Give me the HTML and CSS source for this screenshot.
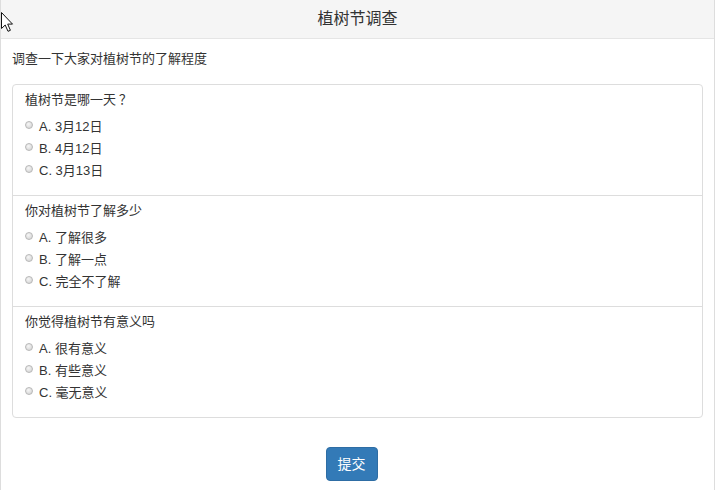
FILE: index.html
```html
<!DOCTYPE html>
<html lang="zh-CN">
<head>
  <meta charset="UTF-8">
  <meta name="viewport" content="width=device-width, initial-scale=1.0">
  <title>植树节调查</title>
  <link rel="stylesheet" href="styles.css">
</head>
<body>

  <div class="page">
    <div class="page-header">植树节调查</div>

    <p class="intro">调查一下大家对植树节的了解程度</p>

    <form class="survey">
      <div class="question">
        <p class="question-title">植树节是哪一天<span class="qmark">？</span></p>
        <label class="option"><input type="radio" name="q1"> A. 3月12日</label>
        <label class="option"><input type="radio" name="q1"> B. 4月12日</label>
        <label class="option"><input type="radio" name="q1"> C. 3月13日</label>
      </div>
      <div class="question">
        <p class="question-title">你对植树节了解多少</p>
        <label class="option"><input type="radio" name="q2"> A. 了解很多</label>
        <label class="option"><input type="radio" name="q2"> B. 了解一点</label>
        <label class="option"><input type="radio" name="q2"> C. 完全不了解</label>
      </div>
      <div class="question">
        <p class="question-title">你觉得植树节有意义吗</p>
        <label class="option"><input type="radio" name="q3"> A. 很有意义</label>
        <label class="option"><input type="radio" name="q3"> B. 有些意义</label>
        <label class="option"><input type="radio" name="q3"> C. 毫无意义</label>
      </div>
    </form>

    <div class="actions">
      <button type="button" class="btn-submit">提交</button>
    </div>
  </div>

  <!-- 鼠标指针 -->
  <svg class="cursor" width="13" height="20" viewBox="0 0 13 20">
    <path d="M0.5 0.5 L0.5 16.5 L4.2 13 L7 19.3 L9.4 18.3 L6.7 12.1 L11.5 12.1 Z" fill="#fff" stroke="#111" stroke-width="1" stroke-linejoin="miter"/>
  </svg>

</body>
</html>
```

FILE: styles.css
```css
body {
  margin: 0;
  font-family: "Liberation Sans", "Noto Sans CJK SC", sans-serif;
  color: #333;
  background-color: #fff;
}
.page {
  width: 715px;
  min-height: 100vh;
  box-sizing: border-box;
  border-left: 1px solid #ddd;
  border-right: 1px solid #ddd;
}
.page-header {
  height: 38px;
  line-height: 38px;
  text-align: center;
  font-size: 16px;
  background-color: #f5f5f5;
  border-bottom: 1px solid #e5e5e5;
}
.intro {
  margin: 0 0 15px;
  padding: 10px 11px 0;
  font-size: 13px;
  line-height: 20px;
}
.survey {
  margin: 0 11px;
  border: 1px solid #ddd;
  border-radius: 4px;
}
.question {
  padding: 5px 12px 15px;
}
.question + .question {
  border-top: 1px solid #ddd;
}
.question-title {
  margin: 0 0 4px;
  font-size: 13px;
  line-height: 20px;
}
.qmark {
  margin-left: 3px;
}
.option {
  display: flex;
  align-items: center;
  gap: 6px;
  height: 22px;
  font-size: 13px;
}
.option input {
  appearance: none;
  -webkit-appearance: none;
  width: 8px;
  height: 8px;
  margin: 0;
  border: 1px solid #b8b8b8;
  border-radius: 50%;
  background: radial-gradient(circle at 40% 35%, #f6f6f6, #cfcfcf);
}
.actions {
  padding: 29px 12px 0 0;
  text-align: center;
}
.btn-submit {
  padding: 6px 11px;
  font-family: inherit;
  font-size: 14px;
  line-height: 20px;
  color: #fff;
  background-color: #337ab7;
  border: 1px solid #2e6da4;
  border-radius: 4px;
}
.cursor {
  position: absolute;
  left: 1px;
  top: 12px;
}
```
